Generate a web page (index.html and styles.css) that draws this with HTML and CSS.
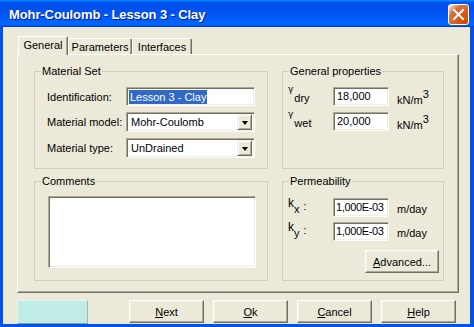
FILE: index.html
```html
<!DOCTYPE html>
<html>
<head>
<meta charset="utf-8">
<link rel="stylesheet" href="styles.css">
</head>
<body>
<div class="window">
  <div class="titlebar">
    <span class="title">Mohr-Coulomb - Lesson 3 - Clay</span>
    <div class="close">
      <svg width="13" height="13" viewBox="0 0 13 13"><path d="M2 2 L11 11 M11 2 L2 11" stroke="#fff" stroke-width="2" stroke-linecap="square"/></svg>
    </div>
  </div>
  <div class="frame">
    <div class="tabs">
      <div class="tab active w-general">General</div>
      <div class="tab w-params">Parameters</div>
      <div class="tab w-inter">Interfaces</div>
    </div>
    <div class="panel">
      <fieldset class="group">
        <legend>Material Set</legend>
        <div class="gbody gb-mat">
          <div class="row">
            <label class="lab-mat">Identification:</label>
            <div class="sunken field-mat"><span class="hl">Lesson 3 - Clay</span></div>
          </div>
          <div class="row">
            <label class="lab-mat">Material model:</label>
            <div class="sunken combo"><span class="combo-text">Mohr-Coulomb</span><span class="drop"><span class="tri"></span></span></div>
          </div>
          <div class="row">
            <label class="lab-mat">Material type:</label>
            <div class="sunken combo"><span class="combo-text">UnDrained</span><span class="drop"><span class="tri"></span></span></div>
          </div>
        </div>
      </fieldset>
      <fieldset class="group">
        <legend>General properties</legend>
        <div class="gbody gb-prop">
          <div class="row">
            <label class="lab-sym"><span class="gam">γ</span><span class="gsub">dry</span></label>
            <div class="sunken num">18,000</div>
            <span class="unit">kN/m<sup>3</sup></span>
          </div>
          <div class="row">
            <label class="lab-sym"><span class="gam">γ</span><span class="gsub">wet</span></label>
            <div class="sunken num">20,000</div>
            <span class="unit">kN/m<sup>3</sup></span>
          </div>
        </div>
      </fieldset>
      <fieldset class="group">
        <legend>Comments</legend>
        <div class="gbody gb-com">
          <div class="sunken memo"></div>
        </div>
      </fieldset>
      <fieldset class="group">
        <legend>Permeability</legend>
        <div class="gbody gb-perm">
          <div class="row">
            <label class="lab-sym lab-k"><span class="k">k</span><span class="ksub">x</span><span class="kcol">:</span></label>
            <div class="sunken num num-e">1,000E-03</div>
            <span class="unit2">m/day</span>
          </div>
          <div class="row">
            <label class="lab-sym lab-k"><span class="k">k</span><span class="ksub">y</span><span class="kcol">:</span></label>
            <div class="sunken num num-e">1,000E-03</div>
            <span class="unit2">m/day</span>
          </div>
          <div class="adv-row">
            <div class="btn adv"><u>A</u>dvanced...</div>
          </div>
        </div>
      </fieldset>
    </div>
    <div class="buttons">
      <div class="swatch"></div>
      <div class="btn next"><u>N</u>ext</div>
      <div class="btn"><u>O</u>k</div>
      <div class="btn"><u>C</u>ancel</div>
      <div class="btn"><u>H</u>elp</div>
    </div>
  </div>
</div>
</body>
</html>
```

FILE: styles.css
```css
* { box-sizing: border-box; }
html, body { margin: 0; padding: 0; }
body {
  width: 474px; height: 327px; overflow: hidden; background: #ece9d8;
  font-family: "Liberation Sans", Arial, sans-serif; font-size: 11px; color: #000;
}
.window { width: 474px; height: 327px; display: flex; flex-direction: column; }
.titlebar {
  height: 27px; flex: none; display: flex; align-items: center; justify-content: space-between;
  padding: 0 5px 0 9px;
  background: linear-gradient(180deg, #0997ff 0, #0053ee 8%, #0050ee 40%, #0066ff 88%, #0066ff 93%, #005bff 95%, #003dd7 96%, #003dd7 100%);
}
.title {
  color: #fff; font-weight: bold; font-size: 13px; letter-spacing: -0.1px;
  text-shadow: 1px 1px 0 #0a1e8c; margin-top: 1px;
}
.close {
  width: 21px; height: 21px; margin-top: 1px; border: 1px solid #fff; border-radius: 3px;
  background: radial-gradient(circle at 90% 90%, #cc4600 0, #dc6527 55%, #cd7546 70%, #ffccb2 90%, #fff 100%);
  display: flex; align-items: center; justify-content: center;
}
.frame {
  flex: 1; display: flex; flex-direction: column; background: #ece9d8;
  border-style: solid; border-color: #0054e3; border-width: 0 4px 3px 3px;
}
.tabs { display: flex; align-items: flex-end; height: 18px; margin: 9px 0 0 15px; position: relative; z-index: 1; }
.tab {
  height: 16px; border: 1px solid; border-bottom: none; border-color: #fff #716f64 #716f64 #fff;
  box-shadow: inset -1px 0 #aca899; border-radius: 2px 2px 0 0;
  display: flex; align-items: center; justify-content: center; padding-top: 1px;
}
.tab.active { height: 19px; margin-bottom: -1px; background: #ece9d8; padding-top: 0; padding-bottom: 2px; }
.w-general { width: 50px; }
.w-params { width: 64px; }
.w-inter { width: 60px; }
.panel {
  width: 442px; height: 239px; margin-left: 14px;
  border: 1px solid; border-color: #fff #716f64 #716f64 #fff; box-shadow: inset -1px -1px #aca899;
  display: grid; grid-template-columns: 234px 162px; grid-template-rows: 104px 106px;
  column-gap: 14px; row-gap: 6px; padding: 10px 0 0 16px;
}
.group { margin: 0; padding: 0; min-width: 0; border: 1px solid #d0d0bf; }
.group legend { padding: 0 1px; margin-left: 6px; line-height: 13px; height: 13px; }
.gbody { display: flex; flex-direction: column; }
.gb-mat { padding: 9px 0 0 12px; gap: 6px; }
.gb-prop { padding: 9px 0 0 5px; gap: 6px; }
.gb-com { padding: 8px 0 0 13px; }
.gb-perm { padding: 10px 4px 0 5px; gap: 5px; }
.row { display: flex; align-items: center; }
.lab-mat { width: 79px; }
.sunken {
  background: #fff; border: 1px solid; border-color: #aca899 #fff #fff #aca899;
  box-shadow: inset 1px 1px #716f64, inset -1px -1px #f1efe2;
}
.field-mat { width: 129px; height: 19px; padding: 2px 0 0 2px; display: flex; }
.hl { background: #316ac5; color: #fff; height: 14px; line-height: 14px; padding: 0 1px; }
.combo { width: 129px; height: 20px; display: flex; align-items: center; justify-content: space-between; padding: 2px; }
.combo-text { padding-left: 2px; }
.drop {
  width: 15px; height: 16px; background: #ece9d8; border: 1px solid; border-color: #f1efe2 #716f64 #716f64 #f1efe2;
  box-shadow: inset 1px 1px #fff, inset -1px -1px #aca899;
  display: flex; align-items: center; justify-content: center;
}
.tri { width: 0; height: 0; border-left: 3.5px solid transparent; border-right: 3.5px solid transparent; border-top: 4px solid #000; margin-top: 1px; }
.lab-sym { width: 45px; height: 19px; display: flex; align-items: flex-start; }
.gam { font-family: "DejaVu Sans", sans-serif; font-size: 9px; line-height: 9px; margin-top: -2px; }
.gsub { line-height: 11px; margin-top: 6px; margin-left: 1px; }
.num { width: 56px; height: 19px; padding: 0 0 0 3px; line-height: 16px; }
.num-e { padding-left: 2px; letter-spacing: -0.35px; white-space: nowrap; overflow: hidden; }
.unit { margin-left: 8px; padding-top: 7px; }
.unit sup { font-size: 11px; vertical-align: 6px; line-height: 0; }
.lab-k { height: 19px; }
.k { font-size: 12px; line-height: 12px; margin-top: -1px; }
.ksub { line-height: 11px; margin-top: 6px; }
.kcol { line-height: 11px; margin-left: 4px; margin-top: 3px; }
.unit2 { margin-left: 8px; padding-top: 2px; }
.memo { width: 208px; height: 72px; }
.adv-row { display: flex; justify-content: flex-end; margin-top: 4px; }
.btn {
  width: 75px; height: 23px; margin-left: 9px; background: #ece9d8;
  border: 1px solid; border-color: #fff #716f64 #716f64 #fff;
  box-shadow: inset -1px -1px #aca899, inset 1px 1px #f1efe2;
  display: flex; align-items: center; justify-content: center;
}
.btn.adv { width: 74px; margin-left: 0; }
.buttons { display: flex; margin: 7px 0 0 14px; height: 23px; }
.swatch { width: 71px; height: 24px; background: #bfece4; border: 1px solid; border-color: #e4f6f2 #9fb8b2 #8a9e99 #e4f6f2; }
.btn.next { margin-left: 41px; }
```
